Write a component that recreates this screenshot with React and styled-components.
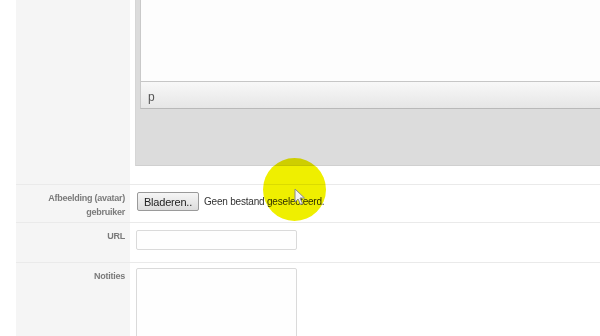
import React from "react";
import styled, { createGlobalStyle } from "styled-components";

const Global = createGlobalStyle`
  html, body { margin: 0; padding: 0; background: #ffffff; overflow: hidden; }
  body { font-family: "Liberation Sans", Arial, sans-serif; }
  #root { width: 600px; height: 336px; overflow: hidden; position: relative; }
`;

const Page = styled.div`
  padding-left: 16px;
  background: #ffffff;
  width: 600px;
  box-sizing: border-box;
`;

const Row = styled.div`
  display: grid;
  grid-template-columns: 114px 1fr;
  border-top: ${(p) => (p.$first ? "none" : "1px solid #eaeaea")};
`;

const Label = styled.div`
  background: #f5f5f5;
  color: #7a7a7a;
  font-weight: bold;
  font-size: 9px;
  letter-spacing: -0.25px;
  line-height: 14px;
  text-align: right;
  padding: ${(p) => p.$pad || "6px"} 5px 0 8px;
`;

const Field = styled.div`
  padding: ${(p) => p.$pad || "7px 0 12px 6px"};
  display: flex;
  gap: 5px;
  align-items: flex-start;
`;

const EditorWrap = styled.div`
  flex: 1;
  background: #dcdcdc;
  border-bottom: 1px solid #d0d0d0;
  box-shadow: -1px 0 0 #d6d6d6;
  padding: 0 0 56px 4px;
`;

const EditorArea = styled.div`
  height: 81px;
  background: #fdfdfd;
  border-left: 1px solid #c9c9c9;
  border-bottom: 1px solid #c6c6c6;
`;

const StatusBar = styled.div`
  height: 26px;
  border-left: 1px solid #c9c9c9;
  border-bottom: 1px solid #b9b9b9;
  background: linear-gradient(#f8f8f8, #e6e6e6);
  color: #555;
  font-size: 12px;
  line-height: 30px;
  padding-left: 7px;
`;

const FileButton = styled.button`
  height: 19px;
  width: 62px;
  padding: 0;
  margin: 0 0 0 1px;
  border: 1px solid #9a9a9a;
  border-radius: 2px;
  background: linear-gradient(#f6f6f6, #dcdcdc);
  font-family: "Liberation Sans", Arial, sans-serif;
  font-size: 11px;
  letter-spacing: -0.2px;
  color: #222;
`;

const FileText = styled.span`
  font-size: 10px;
  letter-spacing: -0.2px;
  line-height: 19px;
  color: #333;
`;

const TextInput = styled.div`
  width: 159px;
  height: 18px;
  border: 1px solid #dadada;
  border-radius: 2px;
  background: #fefefe;
`;

const TextArea = styled.div`
  width: 159px;
  height: 80px;
  border: 1px solid #dadada;
  border-radius: 2px;
  background: #fefefe;
`;

const Spot = styled.div`
  position: absolute;
  left: 263px;
  top: 158px;
  width: 63px;
  height: 63px;
  border-radius: 50%;
  background: #efef00;
  mix-blend-mode: multiply;
  filter: blur(0.6px);
  pointer-events: none;
`;

const Pointer = styled.svg`
  position: absolute;
  left: 294px;
  top: 188px;
  pointer-events: none;
`;

export default function App() {
  return (
    <>
      <Global />
      <Page>
        <Row $first>
          <Label />
          <Field $pad="0 0 18px 6px">
            <EditorWrap>
              <EditorArea />
              <StatusBar>p</StatusBar>
            </EditorWrap>
          </Field>
        </Row>
        <Row>
          <Label $pad="6px">
            Afbeelding (avatar)
            <br />
            gebruiker
          </Label>
          <Field $pad="7px 0 11px 6px">
            <FileButton>Bladeren..</FileButton>
            <FileText>Geen bestand geselecteerd.</FileText>
          </Field>
        </Row>
        <Row>
          <Label $pad="6px">URL</Label>
          <Field $pad="7px 0 12px 6px">
            <TextInput />
          </Field>
        </Row>
        <Row>
          <Label $pad="6px">Notities</Label>
          <Field $pad="5px 0 12px 6px">
            <TextArea />
          </Field>
        </Row>
      </Page>
      <Spot />
      <Pointer width="12" height="18" viewBox="0 0 12 18">
        <path
          d="M1 1 L1 14 L4 11 L6.5 16.5 L8.5 15.5 L6 10 L10.5 10 Z"
          fill="#f4f4f4"
          stroke="#8a8a8a"
          strokeWidth="1"
          strokeLinejoin="round"
        />
      </Pointer>
    </>
  );
}
